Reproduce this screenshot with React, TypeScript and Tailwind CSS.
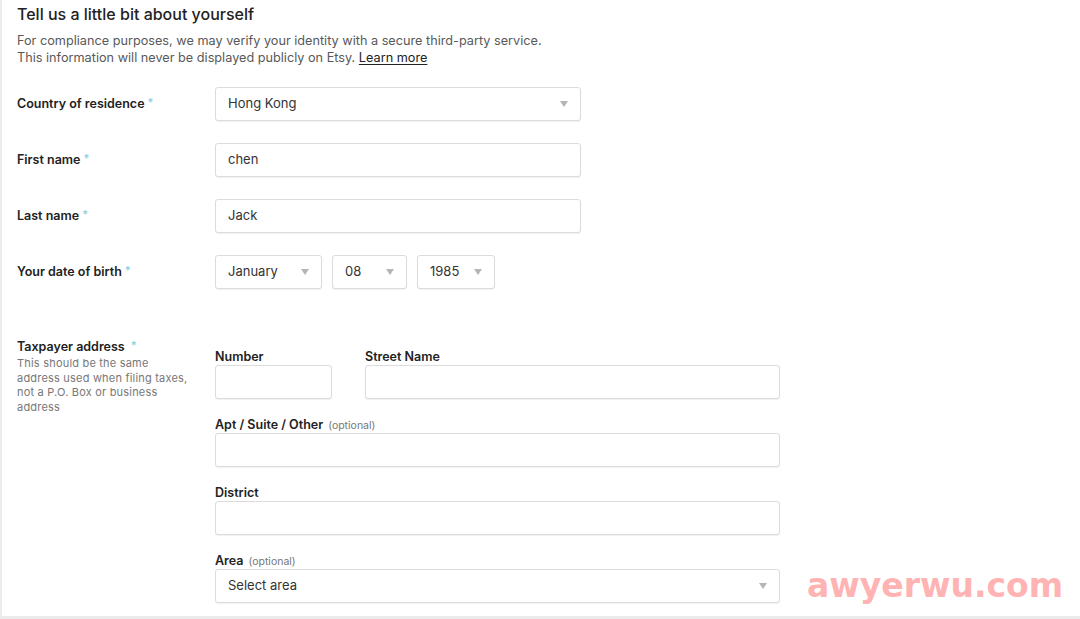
import type { ReactNode } from 'react';

const FONT = 'font-["Inter","Liberation_Sans",sans-serif]';

function Caret() {
  return (
    <svg width="8" height="6" viewBox="0 0 8 6" className="shrink-0">
      <path d="M0 0h8L4 6z" fill="#b5b5b5" />
    </svg>
  );
}

function Box({ w, children, select }: { w: string; children?: ReactNode; select?: boolean }) {
  return (
    <div
      className={`${w} h-[34px] rounded-[3px] border border-[#dcdcdc] bg-white shadow-[0_1px_1px_rgba(0,0,0,0.06)] flex items-center justify-between pl-[12px] pr-[12px] text-[13px] text-[#333]`}
    >
      <span>{children}</span>
      {select && <Caret />}
    </div>
  );
}

function Req() {
  return <span className="text-[#8fd0e3] text-[11px] ml-[3px] relative -top-[2px]">*</span>;
}

function Row({ label, children }: { label: string; children: ReactNode }) {
  return (
    <div className="flex items-center h-[34px]">
      <div className="w-[198px] text-[12.5px] font-semibold text-[#222]">
        {label}
        <Req />
      </div>
      {children}
    </div>
  );
}

function Field({ label, optional, children }: { label: string; optional?: boolean; children: ReactNode }) {
  return (
    <div>
      <div className="h-[17px] leading-[17px] text-[12.5px] font-semibold text-[#222]">
        {label}
        {optional && <span className="ml-[5px] text-[10.5px] font-normal text-[#777]">(optional)</span>}
      </div>
      {children}
    </div>
  );
}

export default function App() {
  return (
    <div className={`${FONT} relative w-[1080px] h-[619px] overflow-hidden bg-white border-l-2 border-b-[3px] border-[#ebebeb]`}>
      <div className="pl-[15px] pt-[3px]">
        <h1 className="text-[16px] leading-[22px] font-medium text-[#222]">Tell us a little bit about yourself</h1>
        <p className="mt-[7px] text-[12.7px] leading-[17px] text-[#595959]">
          For compliance purposes, we may verify your identity with a secure third-party service.
          <br />
          This information will never be displayed publicly on Etsy.{' '}
          <a href="#" className="text-[#222] underline underline-offset-2">Learn more</a>
        </p>

        <div className="mt-[21px] flex flex-col gap-[22px]">
          <Row label="Country of residence">
            <Box w="w-[366px]" select>Hong Kong</Box>
          </Row>
          <Row label="First name">
            <Box w="w-[366px]">chen</Box>
          </Row>
          <Row label="Last name">
            <Box w="w-[366px]">Jack</Box>
          </Row>
          <Row label="Your date of birth">
            <div className="flex gap-[10px]">
              <Box w="w-[107px]" select>January</Box>
              <Box w="w-[75px]" select>08</Box>
              <Box w="w-[78px]" select>1985</Box>
            </div>
          </Row>
        </div>

        <div className="mt-[50px] flex">
          <div className="w-[198px]">
            <div className="text-[12.5px] leading-[15px] font-semibold text-[#222]">
              Taxpayer address
              <span className="ml-[3px]"><Req /></span>
            </div>
            <p className="mt-[1px] text-[11px] leading-[14.5px] tracking-[0.2px] text-[#777]">
              This should be the same
              <br />
              address used when filing taxes,
              <br />
              not a P.O. Box or business
              <br />
              address
            </p>
          </div>
          <div className="pt-[9px] flex flex-col gap-[17px]">
            <div className="flex gap-[33px]">
              <Field label="Number">
                <Box w="w-[117px]" />
              </Field>
              <Field label="Street Name">
                <Box w="w-[415px]" />
              </Field>
            </div>
            <Field label="Apt / Suite / Other" optional>
              <Box w="w-[565px]" />
            </Field>
            <Field label="District">
              <Box w="w-[565px]" />
            </Field>
            <Field label="Area" optional>
              <Box w="w-[565px]" select>Select area</Box>
            </Field>
          </div>
        </div>
      </div>

      <div className="absolute left-[805px] top-[566px] text-[33px] leading-[40px] font-bold text-[#ffb3b3] font-['DejaVu_Sans',sans-serif]">
        awyerwu.com
      </div>
    </div>
  );
}
